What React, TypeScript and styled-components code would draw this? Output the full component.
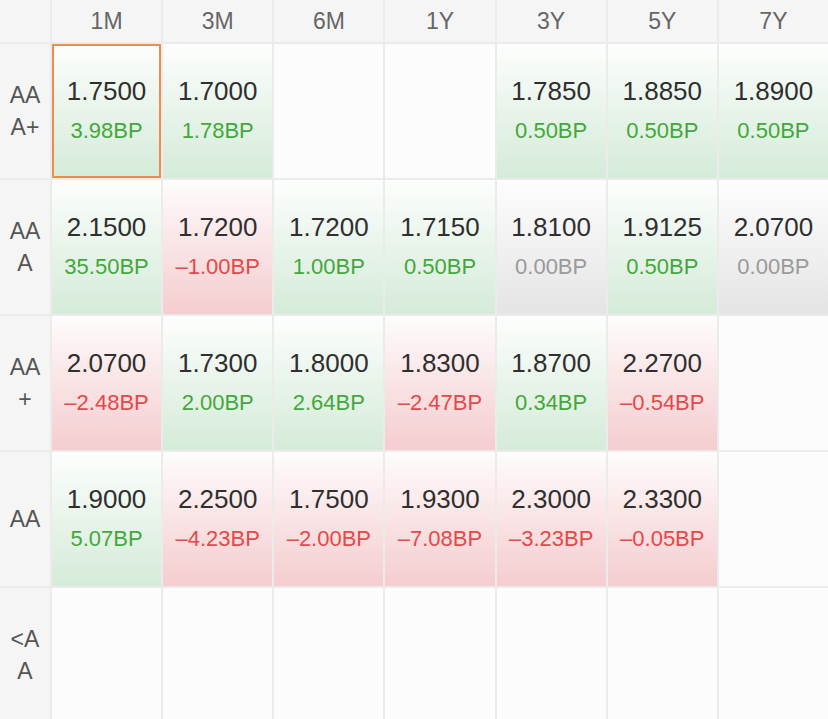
import React from 'react';
import styled, { createGlobalStyle, css } from 'styled-components';

const GlobalStyle = createGlobalStyle`
    html, body {
        margin: 0;
        padding: 0;
        background: #ebebeb;
        overflow: hidden;
    }
    body {
        font-family: "Liberation Sans", Arial, sans-serif;
    }
`;

type Trend = 'up' | 'down' | 'flat';

interface Quote {
    rate: string;
    change: string;
    trend: Trend;
}

const columns = ['1M', '3M', '6M', '1Y', '3Y', '5Y', '7Y'];

const q = (rate: string, change: string, trend: Trend): Quote => ({ rate, change, trend });

const rows: { label: string[]; cells: (Quote | null)[] }[] = [
    {
        label: ['AA', 'A+'],
        cells: [
            q('1.7500', '3.98BP', 'up'),
            q('1.7000', '1.78BP', 'up'),
            null,
            null,
            q('1.7850', '0.50BP', 'up'),
            q('1.8850', '0.50BP', 'up'),
            q('1.8900', '0.50BP', 'up'),
        ],
    },
    {
        label: ['AA', 'A'],
        cells: [
            q('2.1500', '35.50BP', 'up'),
            q('1.7200', '–1.00BP', 'down'),
            q('1.7200', '1.00BP', 'up'),
            q('1.7150', '0.50BP', 'up'),
            q('1.8100', '0.00BP', 'flat'),
            q('1.9125', '0.50BP', 'up'),
            q('2.0700', '0.00BP', 'flat'),
        ],
    },
    {
        label: ['AA', '+'],
        cells: [
            q('2.0700', '–2.48BP', 'down'),
            q('1.7300', '2.00BP', 'up'),
            q('1.8000', '2.64BP', 'up'),
            q('1.8300', '–2.47BP', 'down'),
            q('1.8700', '0.34BP', 'up'),
            q('2.2700', '–0.54BP', 'down'),
            null,
        ],
    },
    {
        label: ['AA'],
        cells: [
            q('1.9000', '5.07BP', 'up'),
            q('2.2500', '–4.23BP', 'down'),
            q('1.7500', '–2.00BP', 'down'),
            q('1.9300', '–7.08BP', 'down'),
            q('2.3000', '–3.23BP', 'down'),
            q('2.3300', '–0.05BP', 'down'),
            null,
        ],
    },
    {
        label: ['<A', 'A'],
        cells: [null, null, null, null, null, null, null],
    },
];

const backgrounds: Record<Trend | 'empty', string> = {
    up: 'linear-gradient(180deg, #fdfefd 0%, #eaf5ec 45%, #d5ebd9 100%)',
    down: 'linear-gradient(180deg, #fefcfc 0%, #fae6e7 45%, #f4cdcf 100%)',
    flat: 'linear-gradient(180deg, #fdfdfd 0%, #f2f2f2 45%, #e4e4e4 100%)',
    empty: '#fcfcfc',
};

const changeColors: Record<Trend, string> = {
    up: '#43a83b',
    down: '#e24a4a',
    flat: '#9a9a9a',
};

const Grid = styled.div`
    display: grid;
    grid-template-columns: 50px repeat(7, 1fr);
    grid-auto-rows: 134px;
    grid-template-rows: 42px;
    gap: 2px;
    width: 828px;
    background: #ebebeb;
`;

const Corner = styled.div`
    background: #f5f5f5;
`;

const HeaderCell = styled.div`
    display: flex;
    align-items: center;
    justify-content: center;
    background: #f5f5f5;
    color: #666;
    font-size: 23px;
`;

const RowLabel = styled.div`
    display: flex;
    flex-direction: column;
    align-items: center;
    justify-content: center;
    background: #f5f5f5;
    color: #555;
    font-size: 23px;
    line-height: 32px;
`;

const Cell = styled.div<{ $trend?: Trend; $selected?: boolean }>`
    display: flex;
    flex-direction: column;
    align-items: center;
    justify-content: center;
    gap: 8px;
    background: ${(p) => backgrounds[p.$trend ?? 'empty']};
    ${(p) =>
        p.$selected &&
        css`
            box-shadow: inset 0 0 0 2px #ef8b4d;
        `}
`;

const Rate = styled.div`
    color: #2f2f2f;
    font-size: 26px;
    line-height: 32px;
`;

const Change = styled.div<{ $trend: Trend }>`
    color: ${(p) => changeColors[p.$trend]};
    font-size: 22px;
    line-height: 32px;
`;

const App: React.FC = () => {
    return (
        <>
            <GlobalStyle />
            <Grid>
                <Corner />
                {columns.map((col) => (
                    <HeaderCell key={col}>{col}</HeaderCell>
                ))}

                {rows.map((row, ri) => (
                    <React.Fragment key={ri}>
                        <RowLabel>
                            {row.label.map((line, li) => (
                                <span key={li}>{line}</span>
                            ))}
                        </RowLabel>
                        {row.cells.map((cell, ci) =>
                            cell ? (
                                <Cell key={ci} $trend={cell.trend} $selected={ri === 0 && ci === 0}>
                                    <Rate>{cell.rate}</Rate>
                                    <Change $trend={cell.trend}>{cell.change}</Change>
                                </Cell>
                            ) : (
                                <Cell key={ci} />
                            )
                        )}
                    </React.Fragment>
                ))}
            </Grid>
        </>
    );
};

export default App;
